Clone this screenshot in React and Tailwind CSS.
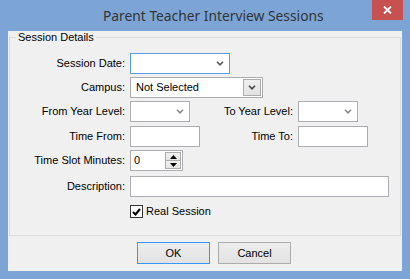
import React from "react";

const font = { fontFamily: '"Liberation Sans", Arial, sans-serif' };

function Chevron({ color = "#555" }) {
  return (
    <svg width="8" height="5" viewBox="0 0 8 5">
      <path d="M1 0.8 L4 3.8 L7 0.8" fill="none" stroke={color} strokeWidth="1.6" />
    </svg>
  );
}

function Label({ children, w = "w-[120px]" }) {
  return <div className={`${w} shrink-0 text-right pr-[5px] text-[11px] text-black leading-[21px]`}>{children}</div>;
}

export default function App() {
  return (
    <div className="w-[410px] h-[279px] bg-[#7ca5d6] flex flex-col" style={font}>
      <div className="h-[31px] flex shrink-0">
        <div
          className="flex-1 flex items-center pl-[103px] text-[13.8px] text-[#333] leading-none"
          style={{ fontFamily: '"Noto Sans", "Open Sans", sans-serif' }}
        >
          Parent Teacher Interview Sessions
        </div>
        <div className="w-[31px] h-[20px] mr-[7px] bg-[#c75050] flex items-center justify-center">
          <svg width="9" height="8" viewBox="0 0 9 8">
            <path d="M1 0.5 L8 7.5 M8 0.5 L1 7.5" stroke="white" strokeWidth="1.8" />
          </svg>
        </div>
      </div>
      <div className="mx-[8px] h-[240px] bg-[#f0f0f0] flex flex-col">
        <div className="mx-[1px] mt-[6px] h-[199px] border border-[#dcdcdc] flex flex-col">
          <div className="flex">
            <span className="-mt-[7px] ml-[6px] px-[2px] bg-[#f0f0f0] text-[11px] leading-[13px] text-black">
              Session Details
            </span>
          </div>
          {/* Session Date */}
          <div className="flex h-[21px] mt-[9px]">
            <Label>Session Date:</Label>
            <div className="w-[100px] h-[21px] bg-white border border-[#569de5] flex items-center justify-end pr-[5px]">
              <Chevron color="#555" />
            </div>
          </div>
          {/* Campus */}
          <div className="flex h-[21px] mt-[3px]">
            <Label>Campus:</Label>
            <div className="w-[133px] h-[21px] bg-white border border-[#acacac] flex items-center">
              <div className="flex-1 pl-[5px] text-[11px] text-black">Not Selected</div>
              <div className="w-[18px] h-[17px] mr-[1px] border border-[#acacac] bg-gradient-to-b from-[#f0f0f0] to-[#e2e2e2] flex items-center justify-center">
                <Chevron color="#444" />
              </div>
            </div>
          </div>
          {/* Year levels */}
          <div className="flex h-[21px] mt-[3px]">
            <Label>From Year Level:</Label>
            <div className="w-[60px] h-[21px] bg-white border border-[#abadb3] flex items-center justify-end pr-[5px]">
              <Chevron color="#888" />
            </div>
            <Label w="w-[108px]">To Year Level:</Label>
            <div className="w-[60px] h-[21px] bg-white border border-[#abadb3] flex items-center justify-end pr-[5px]">
              <Chevron color="#888" />
            </div>
          </div>
          {/* Times */}
          <div className="flex h-[21px] mt-[4px]">
            <Label>Time From:</Label>
            <div className="w-[70px] h-[21px] bg-white border border-[#abadb3]" />
            <Label w="w-[98px]">Time To:</Label>
            <div className="w-[70px] h-[21px] bg-white border border-[#abadb3]" />
          </div>
          {/* Time slot */}
          <div className="flex h-[21px] mt-[3px]">
            <Label>Time Slot Minutes:</Label>
            <div className="w-[53px] h-[21px] bg-white border border-[#abadb3] flex items-center">
              <div className="flex-1 pl-[3px] text-[11px] text-black">0</div>
              <div className="w-[16px] h-[17px] mr-[1px] border border-[#acacac] flex flex-col">
                <div className="flex-1 bg-gradient-to-b from-[#f2f2f2] to-[#e4e4e4] flex items-center justify-center border-b border-[#acacac]">
                  <svg width="7" height="4" viewBox="0 0 7 4"><path d="M3.5 0 L7 4 L0 4 Z" fill="#000" /></svg>
                </div>
                <div className="flex-1 bg-gradient-to-b from-[#f2f2f2] to-[#e4e4e4] flex items-center justify-center">
                  <svg width="7" height="4" viewBox="0 0 7 4"><path d="M0 0 L7 0 L3.5 4 Z" fill="#000" /></svg>
                </div>
              </div>
            </div>
          </div>
          {/* Description */}
          <div className="flex h-[21px] mt-[5px]">
            <Label>Description:</Label>
            <div className="w-[259px] h-[21px] bg-white border border-[#abadb3]" />
          </div>
          {/* Checkbox */}
          <div className="flex h-[13px] mt-[8px] items-center">
            <div className="w-[120px] shrink-0" />
            <div className="w-[13px] h-[13px] bg-white border border-[#333] flex items-center justify-center">
              <svg width="9" height="8" viewBox="0 0 9 8">
                <path d="M1 4 L3.5 6.5 L8 1" fill="none" stroke="#000" strokeWidth="2" />
              </svg>
            </div>
            <div className="ml-[3px] text-[11px] text-black leading-[13px]">Real Session</div>
          </div>
        </div>
        <div className="flex mt-[6px] pl-[129px] gap-[8px]">
          <div className="w-[73px] h-[22px] border border-[#3399ff] bg-gradient-to-b from-[#ececec] to-[#e2e2e2] flex items-center justify-center text-[11px] text-black">
            OK
          </div>
          <div className="w-[73px] h-[22px] border border-[#acacac] bg-gradient-to-b from-[#ececec] to-[#e2e2e2] flex items-center justify-center text-[11px] text-black">
            Cancel
          </div>
        </div>
      </div>
    </div>
  );
}
